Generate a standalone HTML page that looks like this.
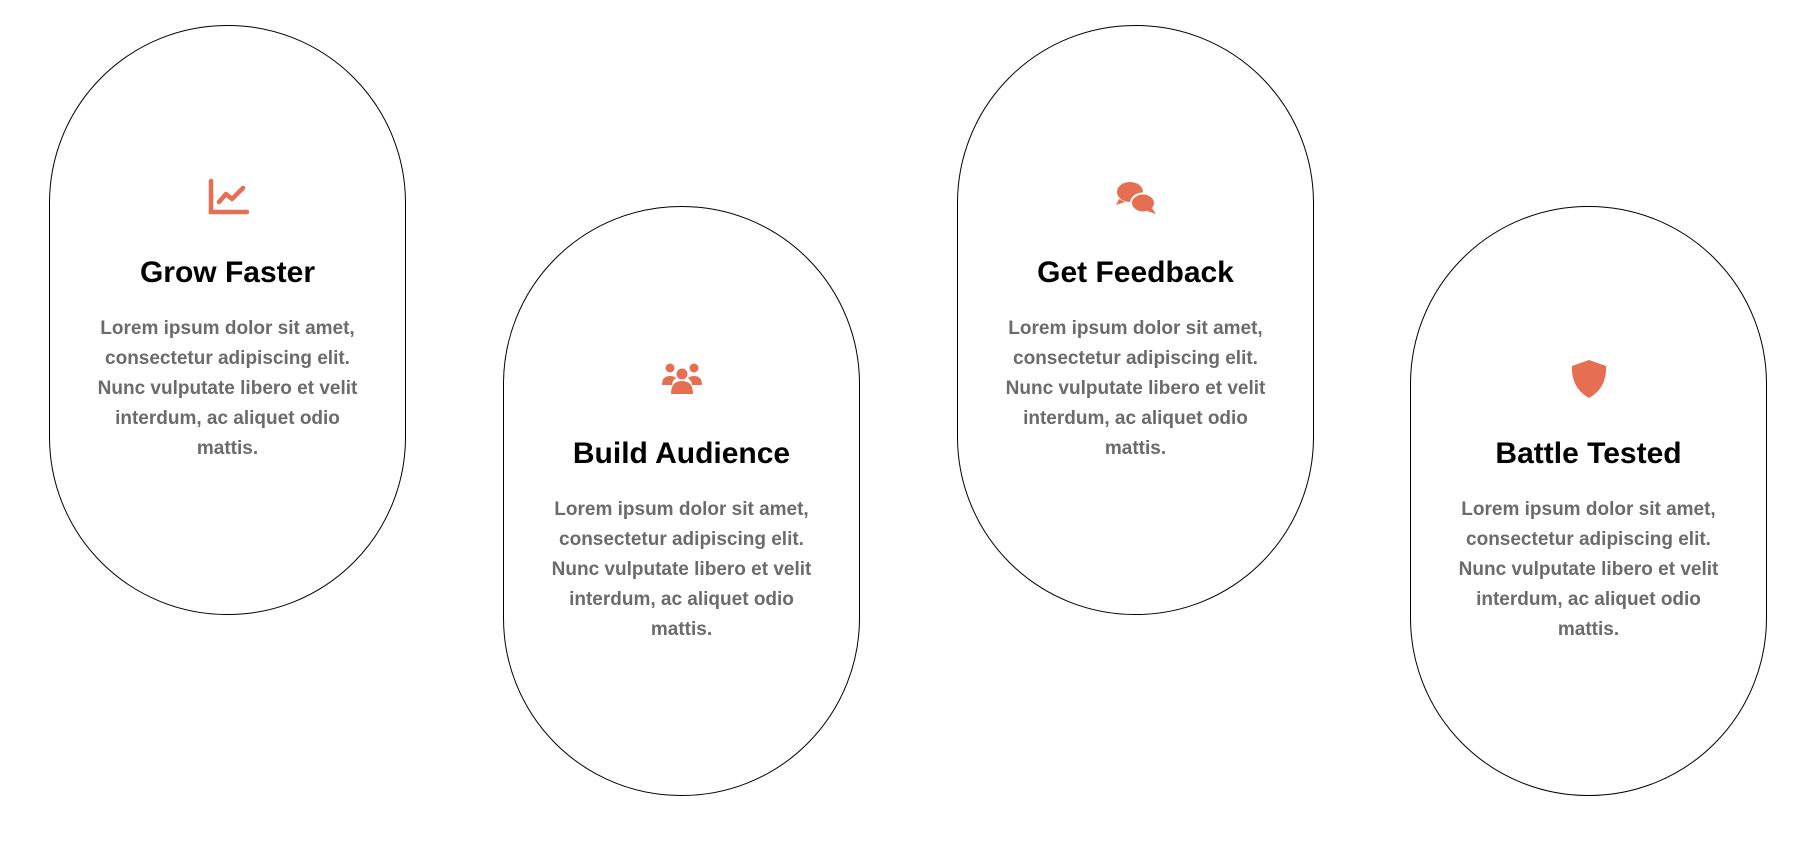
<!DOCTYPE html>
<html><head><meta charset="utf-8"><style>
body{margin:0;width:1816px;height:842px;background:#fff;position:relative;overflow:hidden;font-family:"Liberation Sans",sans-serif}
.c{position:absolute;width:355px;height:588px;border:1px solid #000;border-radius:178px/178px;box-sizing:content-box}
.in{position:absolute;left:0;right:0;text-align:center}
.ic{height:40px;display:flex;justify-content:center;align-items:center}
h2{margin:0;font-size:30px;font-weight:bold;color:#000;line-height:40px;margin-top:35px}
p{margin:21px auto 0;width:290px;font-size:19px;font-weight:bold;color:#6b6b6b;line-height:30px}
</style></head><body>
<div class="c" style="left:49px;top:25px"><div class="in" style="top:152px">
<div class="ic"><svg width="42" height="40" viewBox="0 0 42 40"><path d="M4 3v31h36" fill="none" stroke="#e76f51" stroke-width="4.5" stroke-linecap="round"/><path d="M12 24l7-8 6 5 11-11" fill="none" stroke="#e76f51" stroke-width="4.5" stroke-linecap="round" stroke-linejoin="round"/></svg></div>
<h2>Grow Faster</h2><p>Lorem ipsum dolor sit amet, consectetur adipiscing elit. Nunc vulputate libero et velit interdum, ac aliquet odio mattis.</p></div></div>
<div class="c" style="left:503px;top:206px"><div class="in" style="top:152px">
<div class="ic"><svg width="42" height="36" viewBox="0 0 42 36" fill="#e76f51"><circle cx="9" cy="7" r="4.5"/><circle cx="33" cy="7" r="4.5"/><circle cx="21" cy="13" r="5.5"/><path d="M1 24q0-9 8-9q4 0 6 2q-4 3-4 7z"/><path d="M41 24q0-9-8-9q-4 0-6 2q4 3 4 7z"/><path d="M10 33q0-13 11-13q11 0 11 13z"/></svg></div>
<h2>Build Audience</h2><p>Lorem ipsum dolor sit amet, consectetur adipiscing elit. Nunc vulputate libero et velit interdum, ac aliquet odio mattis.</p></div></div>
<div class="c" style="left:957px;top:25px"><div class="in" style="top:152px">
<div class="ic"><svg width="44" height="38" viewBox="0 0 44 38" fill="#e76f51"><ellipse cx="16" cy="13" rx="13" ry="10"/><path d="M5 20l-3 6 9-3z"/><ellipse cx="29" cy="24" rx="12" ry="9.5" stroke="#fff" stroke-width="2"/><path d="M38 29l4 6-9-3z"/></svg></div>
<h2>Get Feedback</h2><p>Lorem ipsum dolor sit amet, consectetur adipiscing elit. Nunc vulputate libero et velit interdum, ac aliquet odio mattis.</p></div></div>
<div class="c" style="left:1410px;top:206px"><div class="in" style="top:152px">
<div class="ic"><svg width="40" height="42" viewBox="0 0 40 42" fill="#e76f51"><path d="M20 2l17 6q1 22-17 32q-18-10-17-32z"/></svg></div>
<h2>Battle Tested</h2><p>Lorem ipsum dolor sit amet, consectetur adipiscing elit. Nunc vulputate libero et velit interdum, ac aliquet odio mattis.</p></div></div>
</body></html>
